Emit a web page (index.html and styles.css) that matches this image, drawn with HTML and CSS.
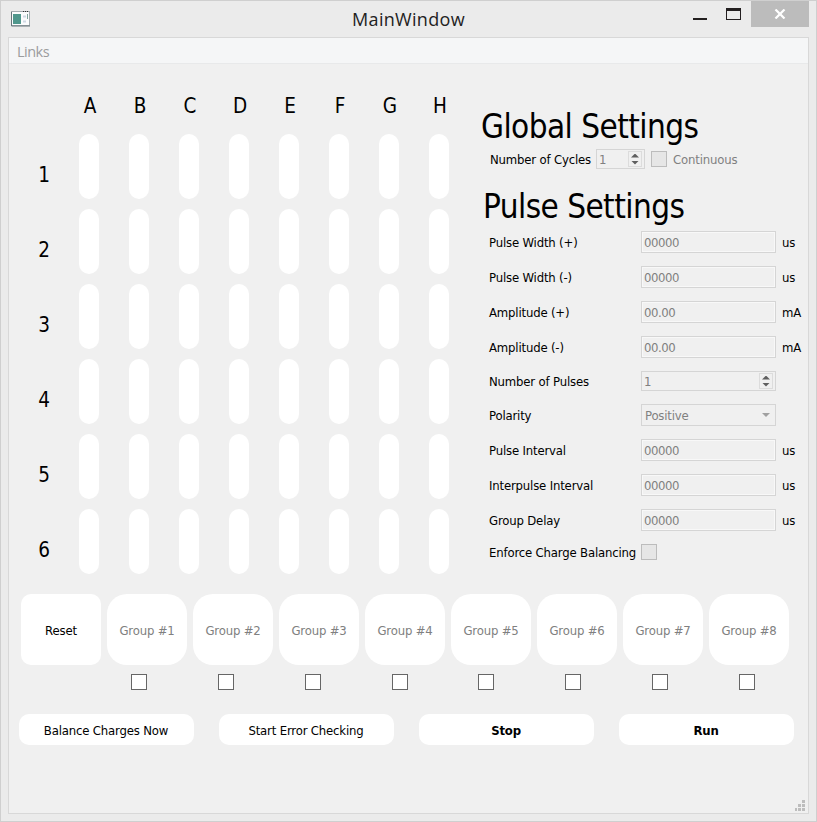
FILE: index.html
```html
<!DOCTYPE html>
<html lang="en">
<head>
<meta charset="utf-8">
<title>MainWindow</title>
<link rel="stylesheet" href="styles.css">
</head>
<body>
<div class="window">
  <header class="titlebar">
    <svg class="app-icon" width="20" height="16" viewBox="0 0 20 16">
      <rect x=".5" y=".5" width="18" height="14" fill="#fbfcfd" stroke="#a4acb0"/>
      <path d="M.5 1v14H19" fill="none" stroke="#66757a"/>
      <path d="M12 .5h1M14 .5h1M16 .5h1" stroke="#333"/>
      <rect x="2" y="3" width="8" height="10" fill="#4f978c"/>
      <path d="M12 5.500h3M12 10.500h3" stroke="#cfd8e4" stroke-width="2"/>
      <path d="M16.500 3v5" stroke="#7fa49d"/>
    </svg>
    <h1 class="title">MainWindow</h1>
    <div class="controls">
      <svg class="min" width="14" height="2"><rect width="14" height="2" fill="#231f20"/></svg>
      <svg class="max" width="15" height="12"><rect x=".5" y=".5" width="14" height="11" fill="none" stroke="#231f20"/><rect width="15" height="3" fill="#231f20"/></svg>
      <div class="close"><svg width="12" height="10" viewBox="0 0 12 10"><path d="M1.500.5 10.500 9.500M10.500.5 1.500 9.500" stroke="#fff" stroke-width="2.200"/></svg></div>
    </div>
  </header>
  <main class="client">
    <nav class="menubar"><span>Links</span></nav>
    <div class="workspace">
      <section class="electrodes" id="electrodes"></section>
      <section class="settings">
        <h2 class="heading">Global Settings</h2>
        <div class="cycles">
          <label class="w-cycles">Number of Cycles</label>
          <div class="field spin small"><span>1</span><div class="steps"><i class="up"></i><i class="down"></i></div></div>
          <div class="check off"></div>
          <span class="dim">Continuous</span>
        </div>
        <h2 class="heading pulse">Pulse Settings</h2>
        <div class="form">
          <label>Pulse Width (+)</label><div class="field">00000</div><span>us</span>
          <label>Pulse Width (-)</label><div class="field">00000</div><span>us</span>
          <label>Amplitude (+)</label><div class="field">00.00</div><span>mA</span>
          <label>Amplitude (-)</label><div class="field">00.00</div><span>mA</span>
          <label>Number of Pulses</label><div class="field spin"><span>1</span><div class="steps"><i class="up"></i><i class="down"></i></div></div><span></span>
          <label>Polarity</label><div class="field combo"><span>Positive</span><i class="down"></i></div><span></span>
          <label>Pulse Interval</label><div class="field">00000</div><span>us</span>
          <label>Interpulse Interval</label><div class="field">00000</div><span>us</span>
          <label>Group Delay</label><div class="field">00000</div><span>us</span>
          <label>Enforce Charge Balancing</label><div class="check off"></div><span></span>
        </div>
      </section>
    </div>
    <div class="groups" id="groups"><button class="group reset">Reset</button></div>
    <div class="checks" id="checks"></div>
    <div class="actions">
      <button>Balance Charges Now</button>
      <button>Start Error Checking</button>
      <button class="strong stop">Stop</button>
      <button class="strong">Run</button>
    </div>
    <svg class="grip" width="11" height="11" fill="#bdbdbd"><path d="M7 0h3v3h-3zM3 4h3v3h-3zM7 4h3v3h-3zM0 8h2v3h-2zM3 8h3v3h-3zM7 8h3v3h-3z"/></svg>
  </main>
</div>
<script src="app.js"></script>
</body>
</html>
```
FILE: styles.css
```css
* { box-sizing: border-box; }
body {
  margin: 0;
  font: 13px/16px "DejaVu Sans Condensed", "DejaVu Sans", sans-serif;
  font-stretch: condensed;
  letter-spacing: -0.17px;
  color: #000;
  white-space: nowrap;
}
h1, h2 { margin: 0; font-weight: 400; }
button { font: inherit; letter-spacing: inherit; color: inherit; border: 0; padding: 0; background: #fff; }
.window {
  width: 817px;
  height: 822px;
  padding: 0 7px 7px;
  background: #ebebeb;
  border: 1px solid #cfcfcf;
  display: flex;
  flex-direction: column;
}
.titlebar { height: 36px; display: grid; grid-template-columns: 1fr auto 1fr; align-items: start; }
.app-icon { margin: 10px 0 0 3px; }
.title {
  font: 18px/36px "Open Sans", sans-serif;
  font-stretch: normal;
  letter-spacing: 0.3px;
  color: #222;
}
.controls { display: flex; justify-content: flex-end; }
.min { margin: 17px 19px 0 0; }
.max { margin: 7px 10px 0 0; }
.close { width: 58px; height: 26px; background: #bcbcbc; display: flex; align-items: center; justify-content: center; padding-right: 1px; }
.client {
  width: 801px;
  height: 777px;
  background: #f0f0f0;
  border: 1px solid #d8d8d8;
  position: relative;
}
.menubar {
  height: 26px;
  padding-left: 8px;
  background: #f5f6f7;
  border-bottom: 1px solid #e8e9ea;
  font: 14.5px/27px "Open Sans", sans-serif;
  font-stretch: normal;
  letter-spacing: -0.5px;
  color: #9b9c9e;
}
.workspace { display: flex; height: 530px; }
.electrodes {
  display: grid;
  grid-template-columns: 40px repeat(8, 20px);
  column-gap: 30px;
  row-gap: 10px;
  grid-template-rows: 30px repeat(6, 65px);
  padding: 30px 0 0 0;
  width: 472px;
  align-content: start;
  font-size: 20.5px;
  line-height: 24px;
  letter-spacing: 0;
}
.electrodes span { text-align: center; justify-self: center; }
.electrodes .row-label { justify-self: end; width: 10px; padding-top: 29px; display: flex; justify-content: center; }
.electrodes .pill { background: #fff; border-radius: 10px; }
.electrodes .col-label { width: 22px; margin: 0 -2px 0 0; }
.settings { padding-top: 42px; }
.heading { font-size: 33px; line-height: 42px; letter-spacing: -0.57px; height: 42px; }
.heading.pulse { margin: 17px 0 3px 2px; }
.cycles { display: flex; align-items: center; margin: 1px 0 0 9px; height: 20px; }
.w-cycles { width: 106px; }
.dim { color: #808080; }
.cycles label, .dim, .form label, .form > span:not(:empty) { padding-top: 2px; }
.field {
  width: 135px;
  height: 22px;
  border: 1px solid #d5d5d5;
  box-shadow: inset 0 0 0 1px #f8f8f8;
  padding-left: 2px;
  line-height: 21px;
  letter-spacing: -0.45px;
  color: #808080;
}
.spin { height: 20px; line-height: 19px; display: flex; justify-content: space-between; padding-right: 2px; box-shadow: none; }
.small { width: 49px; margin-right: 6px; }
.steps {
  width: 14px;
  height: 16px;
  margin-top: 1px;
  border: 1px solid #dcdcdc;
  display: flex;
  flex-direction: column;
  align-items: center;
  justify-content: center;
  gap: 3px;
}
.up, .down { width: 8px; height: 4px; background: #5f5f5f; }
.up { clip-path: polygon(50% 0, 100% 100%, 0 100%); }
.down { clip-path: polygon(0 0, 100% 0, 50% 100%); }
.combo { display: flex; align-items: center; justify-content: space-between; padding: 0 5px 0 3px; box-shadow: none; letter-spacing: -0.2px; }
.combo .down { background: #a0a0a0; }
.check { width: 16px; height: 16px; background: #fff; border: 1px solid #666; }
.check.off { background: #e6e6e6; border-color: #bcbcbc; }
.cycles .check { margin-right: 6px; }
.form {
  display: grid;
  grid-template-columns: 152px 135px auto;
  row-gap: 13px;
  align-items: center;
  padding-left: 8px;
}
.form > label, .form > span { margin: -2px 0; }
.form > span { padding-left: 6px; }
.form > span:empty { height: 0; }
.groups { display: flex; gap: 6px; padding-left: 12px; }
.group { width: 80px; height: 71px; border-radius: 20px; color: #808080; padding-top: 2px; }
.reset { border-radius: 10px; color: #000; }
.checks { display: flex; justify-content: space-between; margin: 9px 53px 0 122px; }
.actions { display: flex; gap: 25px; margin: 24px 0 0 10px; }
.actions button { width: 175px; height: 31px; border-radius: 10px; padding: 2px 1px 0 0; }
.actions .strong { font-weight: 700; }
.grip { position: absolute; right: 2px; bottom: 2px; }
```
FILE: app.js
```js
const add = (parent, tag, cls, text = "") => {
  const el = document.createElement(tag);
  el.className = cls;
  el.textContent = text;
  parent.append(el);
};
const grid = document.getElementById("electrodes");
add(grid, "span", "corner");
for (const c of "ABCDEFGH") add(grid, "span", "col-label", c);
for (let r = 1; r <= 6; r++) {
  add(grid, "span", "row-label", r);
  for (let c = 0; c < 8; c++) add(grid, "div", "pill");
}
for (let g = 1; g <= 8; g++) {
  add(document.getElementById("groups"), "button", "group", "Group #" + g);
  add(document.getElementById("checks"), "div", "check");
}
```
